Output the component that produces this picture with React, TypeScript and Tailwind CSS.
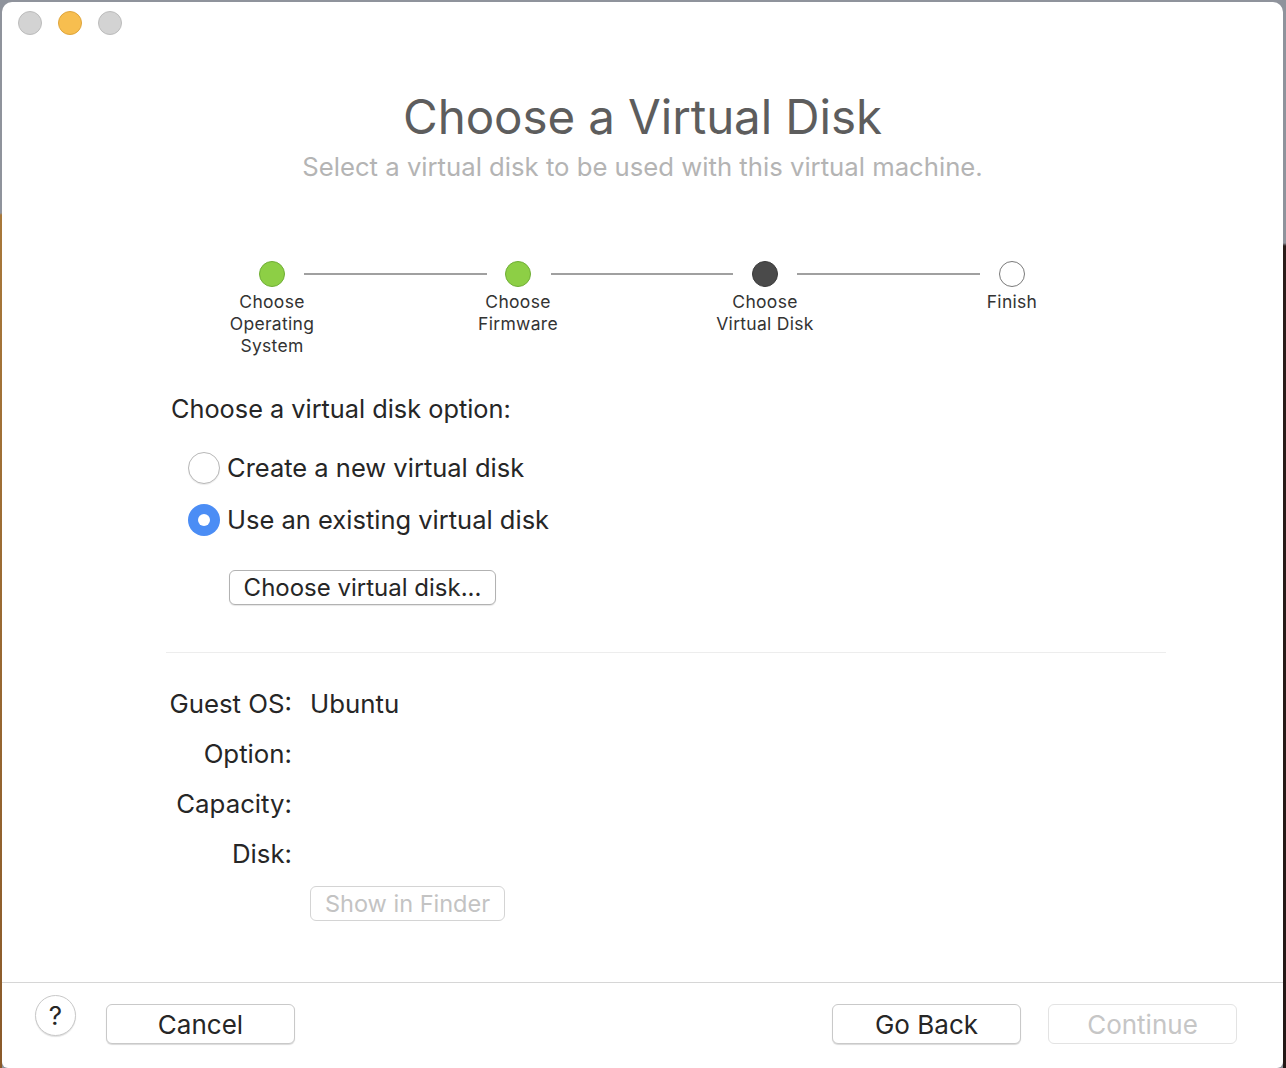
import React from "react";

const font = { fontFamily: "Inter, 'Noto Sans', 'Liberation Sans', sans-serif" };

function Step({ kind }: { kind: "done" | "current" | "todo" }) {
  if (kind === "done")
    return <div className="w-[26px] h-[26px] rounded-full bg-[#8dcf45] border border-[#6fae34] shrink-0" />;
  if (kind === "current")
    return <div className="w-[26px] h-[26px] rounded-full bg-[#4a4a4a] border border-[#3a3a3a] shrink-0" />;
  return <div className="w-[26px] h-[26px] rounded-full bg-white border border-[#7a7a7a] shrink-0" />;
}

export default function App() {
  return (
    <div className="w-[1286px] h-[1068px] flex flex-col bg-[#8f939c] overflow-hidden" style={font}>
      <div className="h-[2px] shrink-0" />
      <div className="flex flex-1 min-h-0">
        <div className="w-[2px] shrink-0 bg-[linear-gradient(to_bottom,#8f939c_0px,#8f939c_211px,#a8783a_213px,#8a5a2a_100%)]" />
        <div className="flex-1 bg-white rounded-t-[10px] rounded-b-[6px] flex flex-col">
          {/* title bar */}
          <div className="flex items-start gap-4 pl-[16px] pt-[9px] h-[44px]">
            <div className="w-[24px] h-[24px] rounded-full bg-[#d3d3d3] border border-[#bcbcbc]" />
            <div className="w-[24px] h-[24px] rounded-full bg-[#f7be4f] border border-[#dfa53c]" />
            <div className="w-[24px] h-[24px] rounded-full bg-[#d3d3d3] border border-[#bcbcbc]" />
          </div>

          {/* heading */}
          <div className="flex flex-col items-center mt-[41px]">
            <div className="text-[47.5px] leading-[60px] text-[#5d5d5d] tracking-[-0.1px]">Choose a Virtual Disk</div>
            <div className="text-[25.7px] leading-[30px] text-[#b4b4b4] mt-[5px]">
              Select a virtual disk to be used with this virtual machine.
            </div>
          </div>

          {/* steps */}
          <div className="mt-[79px] pl-[257px] flex items-center">
            <Step kind="done" />
            <div className="ml-[19px] w-[183px] mr-[18px] h-[2px] bg-[#a0a0a0]" />
            <Step kind="done" />
            <div className="ml-[20px] w-[182px] mr-[19px] h-[2px] bg-[#a0a0a0]" />
            <Step kind="current" />
            <div className="ml-[19px] w-[183px] mr-[19px] h-[2px] bg-[#a0a0a0]" />
            <Step kind="todo" />
          </div>
          <div className="mt-[4px] pl-[200px] flex text-[17.5px] leading-[22px] tracking-[0.3px] text-[#333333] text-center whitespace-nowrap">
            <div className="w-[140px]">Choose<br />Operating<br />System</div>
            <div className="w-[140px] ml-[106px]">Choose<br />Firmware</div>
            <div className="w-[140px] ml-[107px]">Choose<br />Virtual Disk</div>
            <div className="w-[140px] ml-[107px]">Finish</div>
          </div>

          {/* options */}
          <div className="pl-[169px] mt-[37px] text-[25.3px] leading-[30px] text-[#262626]">Choose a virtual disk option:</div>
          <div className="pl-[186px] mt-[28px] flex flex-col gap-[20px] text-[25.5px] text-[#262626]">
            <div className="flex items-center h-[32px] gap-[7px]">
              <div className="w-[32px] h-[32px] rounded-full border border-[#b8b8b8] bg-white shadow-[0_1px_1px_rgba(0,0,0,0.08)]" />
              <span>Create a new virtual disk</span>
            </div>
            <div className="flex items-center h-[32px] gap-[7px]">
              <div className="w-[32px] h-[32px] rounded-full bg-[#4b8df5] flex items-center justify-center">
                <div className="w-[12px] h-[12px] rounded-full bg-white" />
              </div>
              <span>Use an existing virtual disk</span>
            </div>
          </div>
          <div className="pl-[227px] mt-[34px]">
            <div className="inline-flex items-center justify-center w-[267px] h-[35px] rounded-[6px] border border-[#b2b2b2] bg-white text-[24px] text-[#262626] shadow-[0_1px_1px_rgba(0,0,0,0.1)]">
              Choose virtual disk...
            </div>
          </div>

          <div className="ml-[164px] w-[1000px] h-px bg-[#ededed] mt-[47px]" />

          {/* info */}
          <div className="mt-[26px] pl-[164px] grid grid-cols-[126px_1fr] gap-x-[18px] text-[25.8px] leading-[50px] text-[#262626]">
            <div className="text-right">Guest OS:</div>
            <div>Ubuntu</div>
            <div className="text-right">Option:</div>
            <div />
            <div className="text-right">Capacity:</div>
            <div />
            <div className="text-right">Disk:</div>
            <div />
          </div>
          <div className="pl-[308px] mt-[7px]">
            <div className="inline-flex items-center justify-center w-[195px] h-[35px] rounded-[6px] border border-[#d4d4d4] bg-white text-[23.5px] text-[#c3c3c3]">
              Show in Finder
            </div>
          </div>

          <div className="flex-1" />
          <div className="h-px bg-[#d6d6d6]" />
          <div className="h-[85px] flex items-center pl-[33px] pr-[46px] pb-[3px]">
            <div className="w-[41px] h-[41px] rounded-full border border-[#c8c8c8] bg-white flex items-center justify-center text-[26px] text-[#262626] shadow-[0_1px_1px_rgba(0,0,0,0.12)] mb-[17px]">
              ?
            </div>
            <div className="ml-[30px] w-[189px] h-[40px] rounded-[6px] border border-[#c9c9c9] bg-white flex items-center justify-center text-[26px] text-[#262626] shadow-[0_1px_1px_rgba(0,0,0,0.15)]">
              Cancel
            </div>
            <div className="flex-1" />
            <div className="w-[189px] h-[40px] rounded-[6px] border border-[#c9c9c9] bg-white flex items-center justify-center text-[26px] text-[#262626] shadow-[0_1px_1px_rgba(0,0,0,0.15)]">
              Go Back
            </div>
            <div className="ml-[27px] w-[189px] h-[40px] rounded-[6px] border border-[#e3e3e3] bg-white flex items-center justify-center text-[26px] text-[#c6c6c6]">
              Continue
            </div>
          </div>
        </div>
        <div className="w-[3px] shrink-0 bg-[linear-gradient(to_bottom,#8f939c_0px,#8f939c_241px,#2b1d1a_244px,#241816_100%)]" />
      </div>
    </div>
  );
}
